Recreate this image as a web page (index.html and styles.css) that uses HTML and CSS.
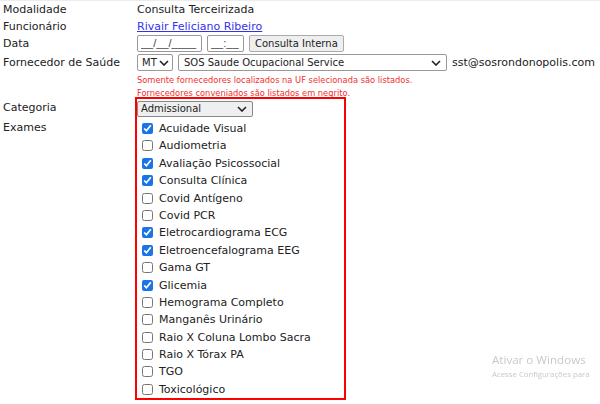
FILE: index.html
```html
<!DOCTYPE html>
<html lang="pt-BR">
<head>
  <meta charset="UTF-8">
  <title>Agendamento de Exame</title>
  <link rel="stylesheet" href="styles.css">
</head>
<body>
  <div class="form">
    <div class="row">
      <div class="label">Modalidade</div>
      <div class="value">Consulta Terceirizada</div>
    </div>
    <div class="row">
      <div class="label">Funcionário</div>
      <div class="value"><a href="#">Rivair Feliciano Ribeiro</a></div>
    </div>
    <div class="row">
      <div class="label">Data</div>
      <div class="value inline date-row">
        <input class="date" type="text" value="__/__/____">
        <input class="time" type="text" value="__:__">
        <button class="btn">Consulta Interna</button>
      </div>
    </div>
    <div class="row">
      <div class="label">Fornecedor de Saúde</div>
      <div class="value">
        <div class="inline provider-row">
          <select class="uf"><option>MT</option></select>
          <select class="provider"><option>SOS Saude Ocupacional Service</option></select>
          <span class="email">sst@sosrondonopolis.com</span>
        </div>
        <p class="note first">Somente fornecedores localizados na UF selecionada são listados.</p>
        <p class="note">Fornecedores conveniados são listados em negrito.</p>
      </div>
    </div>
    <div class="row exams">
      <div class="labels">
        <div class="label">Categoria</div>
        <div class="label">Exames</div>
      </div>
      <div class="highlight">
        <select class="category"><option>Admissional</option></select>
        <ul class="exam-list">
          <li><label><input type="checkbox" checked> Acuidade Visual</label></li>
          <li><label><input type="checkbox"> Audiometria</label></li>
          <li><label><input type="checkbox" checked> Avaliação Psicossocial</label></li>
          <li><label><input type="checkbox" checked> Consulta Clínica</label></li>
          <li><label><input type="checkbox"> Covid Antígeno</label></li>
          <li><label><input type="checkbox"> Covid PCR</label></li>
          <li><label><input type="checkbox" checked> Eletrocardiograma ECG</label></li>
          <li><label><input type="checkbox" checked> Eletroencefalograma EEG</label></li>
          <li><label><input type="checkbox"> Gama GT</label></li>
          <li><label><input type="checkbox" checked> Glicemia</label></li>
          <li><label><input type="checkbox"> Hemograma Completo</label></li>
          <li><label><input type="checkbox"> Manganês Urinário</label></li>
          <li><label><input type="checkbox"> Raio X Coluna Lombo Sacra</label></li>
          <li><label><input type="checkbox"> Raio X Tórax PA</label></li>
          <li><label><input type="checkbox"> TGO</label></li>
          <li><label><input type="checkbox"> Toxicológico</label></li>
        </ul>
      </div>
    </div>
  </div>
  <div class="watermark">
    <div class="wm-title">Ativar o Windows</div>
    <div class="wm-sub">Acesse Configurações para</div>
  </div>
</body>
</html>
```

FILE: styles.css
```css
body {
  margin: 0;
  font-family: "DejaVu Sans", Verdana, sans-serif;
  font-size: 11px;
  color: #222;
  background: #fff;
}
.form {
  border-top: 1px solid #ececec;
  padding: 0 0 0 3px;
}
.row {
  display: flex;
  line-height: 17px;
}
.label {
  width: 134px;
  flex-shrink: 0;
}
.value a {
  color: #3333ee;
}
.inline {
  display: flex;
  align-items: center;
  gap: 5px;
  height: 19px;
}
.date-row {
  margin: -1px 0 1px;
}
.provider-row {
  margin-top: -1px;
}
input[type="text"],
select,
.btn {
  font-family: inherit;
  font-size: 10px;
  height: 17px;
  box-sizing: border-box;
  margin: 0;
  color: #222;
}
input[type="text"] {
  font-family: "Liberation Sans", Arial, sans-serif;
  font-size: 11px;
  border: 1px solid #999;
  border-radius: 2px;
  padding: 0 3px 1px;
  color: #444;
}
.date { width: 65px; }
.time { width: 37px; }
.btn {
  border: 1px solid #aaa;
  border-radius: 2px;
  background: #efefef;
  padding: 0 5px;
}
select {
  appearance: none;
  -webkit-appearance: none;
  border: 1px solid #999;
  border-radius: 2px;
  background-color: #fff;
  background-image: url("data:image/svg+xml;utf8,<svg xmlns='http://www.w3.org/2000/svg' width='10' height='6' viewBox='0 0 10 6'><path d='M1 1l4 4 4-4' fill='none' stroke='%23222' stroke-width='1.6'/></svg>");
  background-repeat: no-repeat;
  background-position: right 5px center;
  padding: 0 18px 0 5px;
}
.uf {
  width: 36px;
  padding: 0 0 0 4px;
  background-position: right 3px center;
}
.provider { width: 269px; }
.email {
  font-size: 11px;
}
.note {
  margin: 0;
  color: #f03030;
  font-size: 8.3px;
  line-height: 13px;
}
.note.first {
  margin-top: 2px;
}
.exams {
  margin-top: -3px;
}
.labels .label {
  line-height: 18px;
  padding-top: 2px;
}
.highlight {
  margin-left: -2px;
  width: 207px;
  border: 2px solid #ff0000;
  padding: 1px 0 0 0;
}
.category {
  width: 116px;
  height: 16px;
  background-color: #efefef;
  border-color: #888;
  padding-left: 3px;
}
.exam-list {
  list-style: none;
  margin: 3px 0 0;
  padding: 0 0 0 5px;
}
.exam-list li {
  height: 17.4px;
  line-height: 17px;
}
.exam-list label {
  display: flex;
  align-items: center;
  gap: 6px;
}
.exam-list input {
  width: 11px;
  height: 11px;
  margin: 0;
  accent-color: #1a73e8;
}
.watermark {
  position: fixed;
  left: 492px;
  top: 352px;
  color: #c8c8c8;
  font-family: "Open Sans", sans-serif;
}
.wm-title {
  font-size: 11.6px;
  line-height: 15px;
}
.wm-sub {
  font-size: 7.8px;
  line-height: 14px;
}
```
